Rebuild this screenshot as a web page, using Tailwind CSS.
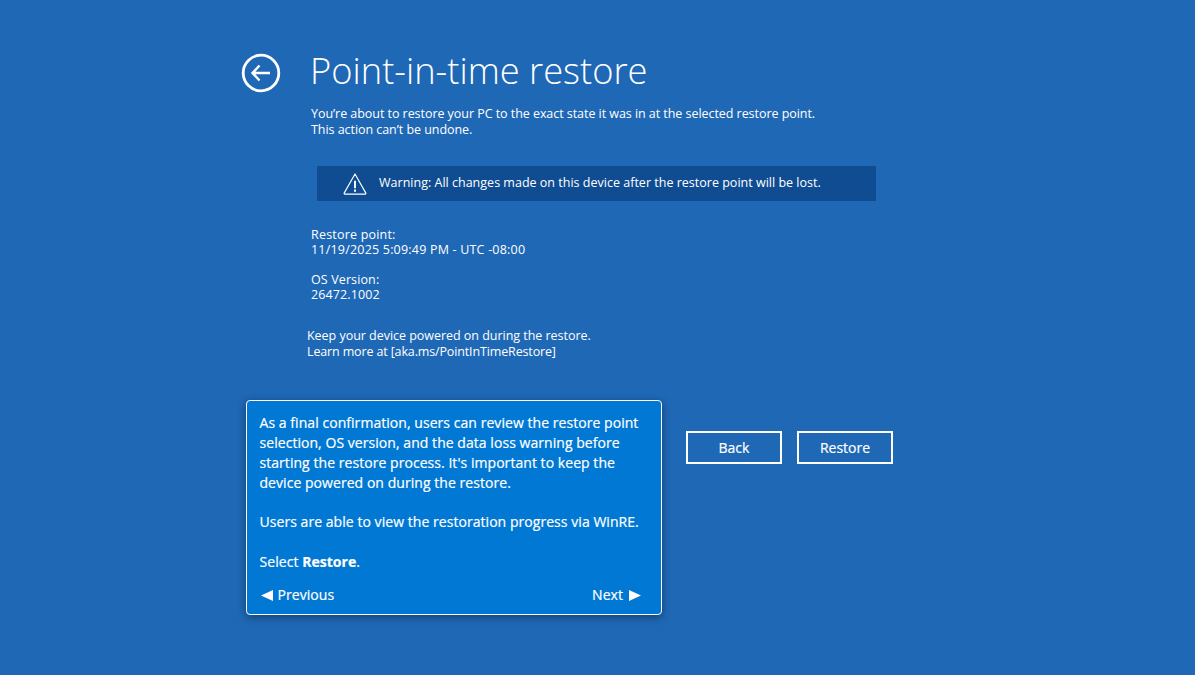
<!DOCTYPE html>
<html><head><script src="https://cdn.jsdelivr.net/npm/@tailwindcss/browser@4"></script></head>
<body class="m-0 w-[1195px] h-[675px] overflow-hidden bg-[#1f68b5] text-white font-['Open_Sans','Noto_Sans',sans-serif]">
<div class="relative w-full h-full">
<div class="flex pl-[241px] pt-[49px]">
<svg class="w-[40px] h-[40px] mt-[4px] mr-[30px] shrink-0" viewBox="0 0 40 40" fill="none" stroke="white" stroke-width="2.800"><circle cx="20" cy="20" r="17.800"/><path d="M29 20H11.500M18.500 12.500 11.500 20l7 7.500" stroke-width="2.400"/></svg>
<div class="flex flex-col">
<h1 class="text-[36.300px] leading-[42px] font-light -ml-px">Point-in-time restore</h1>
<p class="mt-[15px] text-[12.500px] leading-[16px] tracking-[-0.05px]">You’re about to restore your PC to the exact state it was in at the selected restore point.<br>This action can’t be undone.</p>
<div class="mt-[28px] ml-[6px] w-[559px] h-[35px] bg-[#0f4c91] flex items-center pl-[26px]">
<svg class="w-[24px] h-[24px] mr-[12px]" viewBox="0 0 25 24" fill="none" stroke="white" stroke-width="1.200"><path d="M12.500 1.500 23.800 21.500a.7.7 0 0 1-.6 1H1.800a.7.7 0 0 1-.6-1z" stroke-linejoin="round"/><path d="M12.500 8.500v8M12.500 17.800v2.200" stroke-width="2"/></svg>
<span class="text-[12.500px] tracking-[0.01px]">Warning: All changes made on this device after the restore point will be lost.</span>
</div>
<p class="mt-[26px] text-[12.500px] leading-[15px] tracking-[0.2px]">Restore point:<br>11/19/2025 5:09:49 PM - UTC -08:00</p>
<p class="mt-[15px] text-[12.500px] leading-[15px] tracking-[0.12px]">OS Version:<br>26472.1002</p>
<p class="mt-[26px] -ml-[4px] text-[12.500px] leading-[16px] tracking-[-0.03px]">Keep your device powered on during the restore.<br><span class="tracking-[-0.14px]">Learn more at [aka.ms/PointInTimeRestore]</span></p>
</div>
</div>
<div class="absolute left-[246px] top-[400px] w-[416px] h-[215px] bg-[#0078d4] rounded-[4px] border border-white shadow-[0_2px_8px_rgba(0,0,0,0.4)] pl-[12.500px] pr-[20px] pt-[12px] text-[14px] leading-[20px] font-medium tracking-[0.05px] [-webkit-text-stroke:0.2px_white]">
<p class="-mr-[8px]">As a final confirmation, users can review the restore point selection, OS version, and the data loss warning before starting the restore process. It's important to keep the device powered on during the restore.</p>
<p class="mt-[19px] whitespace-nowrap">Users are able to view the restoration progress via WinRE.</p>
<p class="mt-[20px]">Select <b>Restore</b>.</p>
<div class="flex justify-between items-center mt-[13px] ml-px">
<span class="flex items-center gap-[5px]"><svg class="w-[12px] h-[11px]" viewBox="0 0 12 11" fill="white"><path d="M0 5.500 12 0v11z"/></svg>Previous</span>
<span class="flex items-center gap-[6px]">Next<svg class="w-[12px] h-[11px]" viewBox="0 0 12 11" fill="white"><path d="M12 5.500 0 0v11z"/></svg></span>
</div>
</div>
<div class="absolute left-[686px] top-[431px] flex gap-[15px]">
<button class="w-[96px] h-[33px] border-2 border-white text-[14px] font-medium [-webkit-text-stroke:0.2px_white]">Back</button>
<button class="w-[96px] h-[33px] border-2 border-white text-[14px] font-medium [-webkit-text-stroke:0.2px_white]">Restore</button>
</div>
</div>
</body></html>
